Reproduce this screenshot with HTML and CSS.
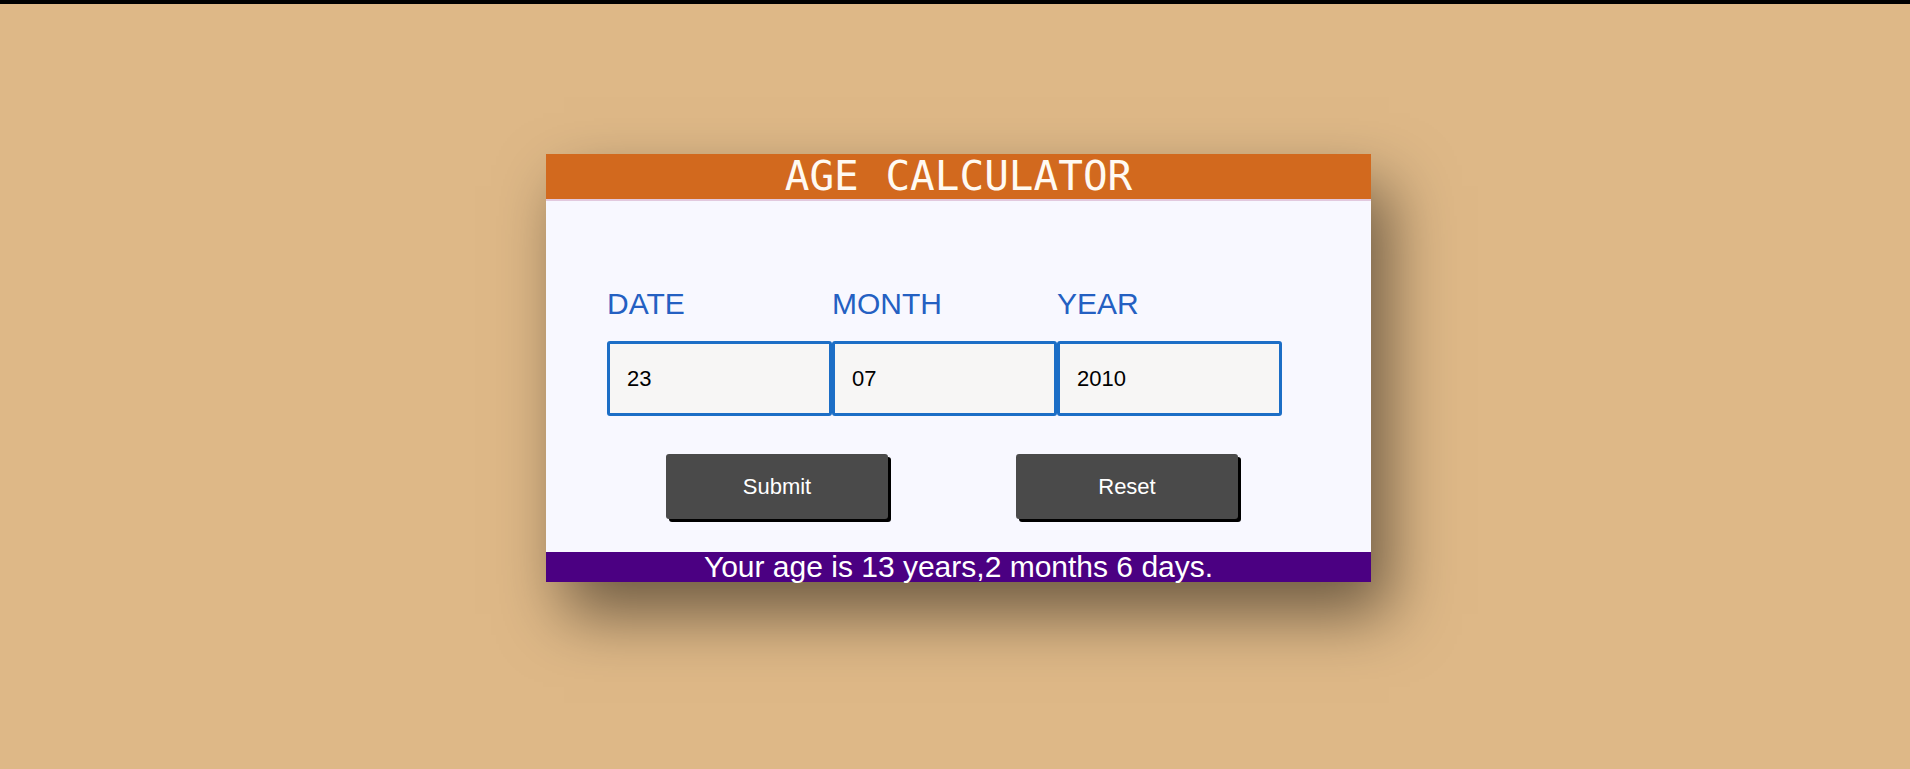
FILE: index.html
```html
<!DOCTYPE html>
<html lang="en">
<head>
<meta charset="utf-8">
<title>Age Calculator</title>
<link rel="stylesheet" href="styles.css">
</head>
<body>
<div class="card">
  <div class="card-header">AGE CALCULATOR</div>
  <div class="card-body">
    <div class="fields">
      <label class="field-label" for="date">DATE</label>
      <label class="field-label" for="month">MONTH</label>
      <label class="field-label" for="year">YEAR</label>
      <input class="field-input" id="date" type="text" value="23">
      <input class="field-input" id="month" type="text" value="07">
      <input class="field-input" id="year" type="text" value="2010">
    </div>
    <div class="actions">
      <button class="btn" type="button">Submit</button>
      <button class="btn" type="button">Reset</button>
    </div>
  </div>
  <div class="result">Your age is 13 years,2 months 6 days.</div>
</div>
</body>
</html>
```
FILE: styles.css
```css
html, body {
  margin: 0;
  padding: 0;
}

body {
  background: #deb887;
  border-top: 4px solid #000;
  min-height: calc(100vh - 4px);
  font-family: "Liberation Sans", Arial, sans-serif;
}

.card {
  width: 825px;
  margin: 150px 0 0 546px;
  background: #f8f8ff;
  box-shadow: 18px 32px 60px rgba(0, 0, 0, 0.5);
}

.card-header {
  height: 45px;
  line-height: 45px;
  background: #d2691e;
  border-bottom: 2px solid #e2c9de;
  color: #fffaf2;
  text-align: center;
  font-family: "DejaVu Sans Mono", monospace;
  font-size: 41px;
  word-spacing: 2px;
}

.card-body {
  padding: 86px 0 33px 61px;
}

.fields {
  display: grid;
  grid-template-columns: repeat(3, 225px);
  row-gap: 21px;
}

.field-label {
  color: #2460c2;
  font-size: 30px;
  line-height: 33px;
}

.field-input {
  box-sizing: border-box;
  width: 225px;
  height: 75px;
  margin: 0;
  padding: 0 0 0 17px;
  border: 3px solid #1c6ec6;
  border-radius: 3px;
  background: #f7f6f5;
  color: #000;
  font-family: "Liberation Sans", Arial, sans-serif;
  font-size: 22px;
  outline: none;
}

.actions {
  display: flex;
  gap: 128px;
  padding-left: 59px;
  margin-top: 38px;
}

.btn {
  width: 222px;
  height: 65px;
  border: none;
  border-radius: 3px;
  background: #4a4a4a;
  color: #fff;
  font-family: "Liberation Sans", Arial, sans-serif;
  font-size: 22px;
  box-shadow: 3px 3px 0 #000;
  cursor: pointer;
}

.result {
  height: 30px;
  line-height: 30px;
  background: #4b0082;
  color: #fff;
  text-align: center;
  font-size: 30px;
  white-space: nowrap;
}
```
